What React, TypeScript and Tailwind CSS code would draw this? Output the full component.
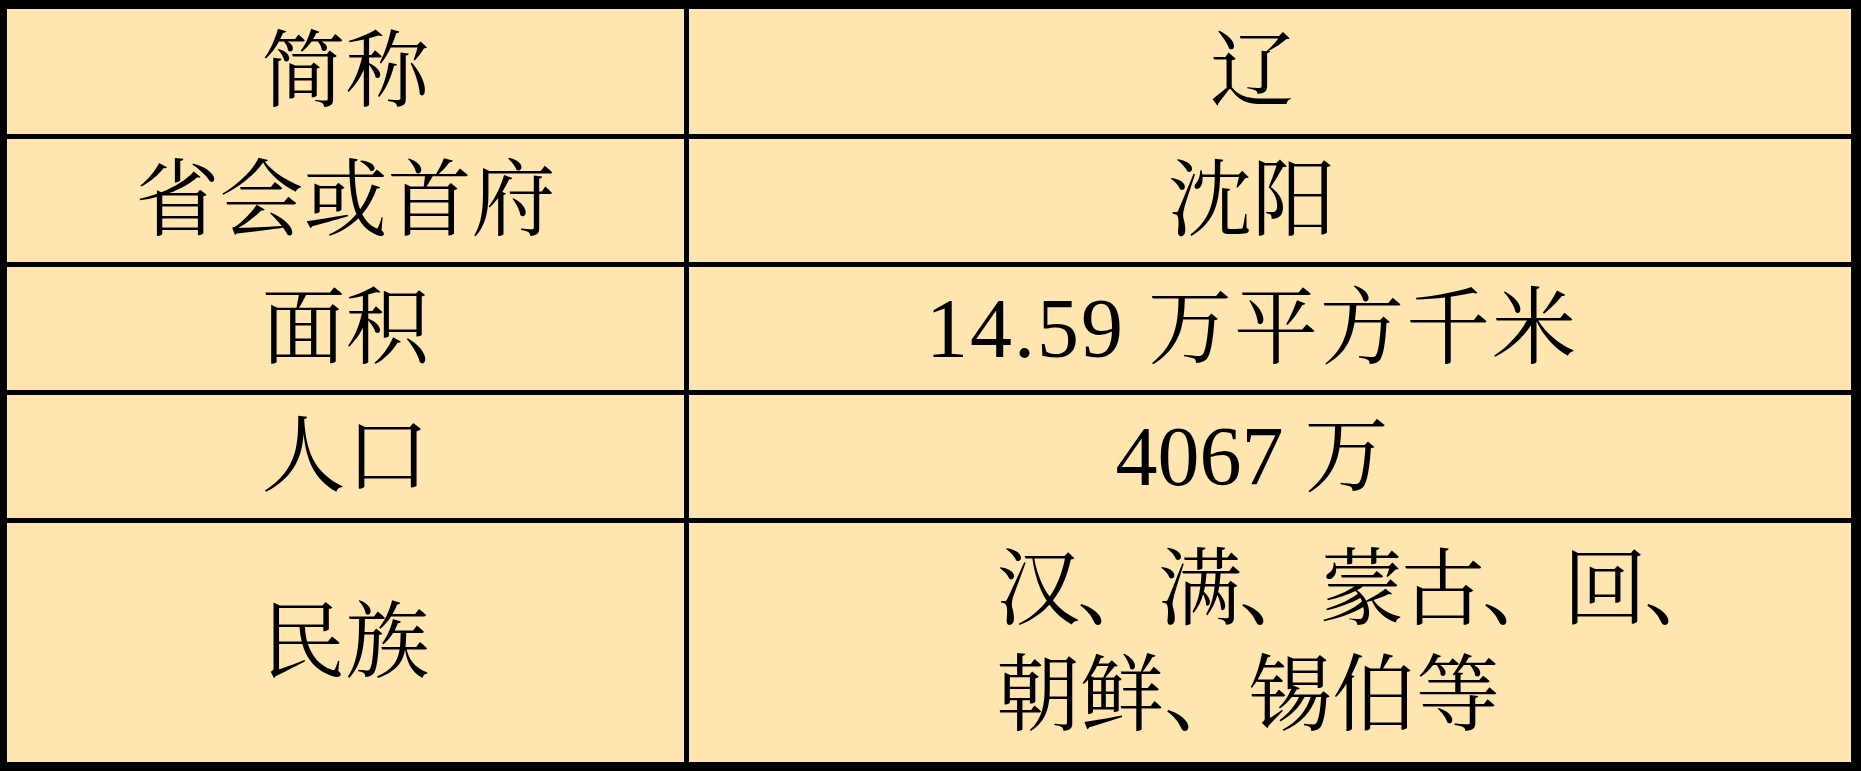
import React from 'react';

const rows: { label: string; value: React.ReactNode }[] = [
  { label: '简称', value: '辽' },
  { label: '省会或首府', value: '沈阳' },
  { label: '面积', value: <span className="tracking-[2px]">14.59 万平方千米</span> },
  { label: '人口', value: '4067 万' },
];

export default function App() {
  return (
    <div
      className="w-[1861px] h-[771px] bg-black pt-[9px] pb-[9px] pl-[7px] pr-[10px] text-black text-[84px] leading-none"
      style={{ fontFamily: '"Liberation Serif", "Noto Serif CJK SC", "Noto Sans CJK SC", serif' }}
    >
      <div className="grid h-full grid-cols-[677px_1162px] grid-rows-[125px_123px_123px_123px_239px] gap-[5px]">
        {rows.map((r) => (
          <React.Fragment key={r.label}>
            <div className="bg-[#FFE6B0] flex items-center justify-center">{r.label}</div>
            <div className="bg-[#FFE6B0] flex items-center justify-center pr-[36px]">{r.value}</div>
          </React.Fragment>
        ))}

        {/* 民族 row */}
        <div className="bg-[#FFE6B0] flex items-center justify-center">民族</div>
        <div className="bg-[#FFE6B0] flex items-center pl-[307px]">
          <div className="leading-[106px] whitespace-nowrap">
            <div className="tracking-[-3px]">汉、满、蒙古、回、</div>
            <div>朝鲜、锡伯等</div>
          </div>
        </div>
      </div>
    </div>
  );
}
